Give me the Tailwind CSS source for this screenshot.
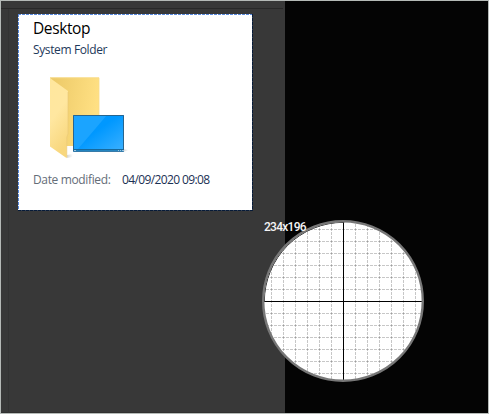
<!DOCTYPE html>
<html lang="en">
<head>
<meta charset="utf-8">
<title>Desktop</title>
<script src="https://cdn.jsdelivr.net/npm/@tailwindcss/browser@4"></script>
</head>
<body class="overflow-hidden">
<main class="relative flex h-[414px] w-[489px] overflow-hidden border border-[#b5bab7] bg-[#040404] font-['Open_Sans',sans-serif]">
  <section class="w-[284px] shrink-0 border-b border-[#303030] bg-[#383838]">
    <div class="mr-[2px] h-2 border-b border-[#292929]"></div>
    <div class="flex h-full">
      <div class="w-2 shrink-0 border-r border-[#333333]"></div>
      <article class="relative mt-[5px] ml-[9px] h-[197px] w-[235px] bg-white pt-[5px] pl-[15px] whitespace-nowrap">
        <svg class="absolute inset-0" width="235" height="197" fill="none">
          <path d="M.5 0V197M0 .5H235" stroke="#5889dd" stroke-dasharray="3 1"/>
          <path d="M234.5 0V197M0 196.5H235" stroke="#344052"/>
          <path d="M234.5 0V197M0 196.5H235" stroke="#071b38" stroke-dasharray="3 1"/>
        </svg>
        <h1 class="h-[21px] text-[15.5px] leading-[19px] tracking-[-0.4px] text-black">Desktop</h1>
        <p class="h-[19px] text-[12px] leading-[20px] tracking-[-0.38px] text-[#1e395b]">System Folder</p>
        <svg class="mt-[13px] ml-[12px] block" width="84" height="89" viewBox="45 72 84 89">
          <defs>
            <linearGradient id="back" x1="0" y1="0" x2="1" y2="0.2"><stop stop-color="#ebc866"/><stop offset="1" stop-color="#ffe083"/></linearGradient>
            <linearGradient id="flap" x1="0" y1="0" x2="0.3" y2="1"><stop stop-color="#ffe79d"/><stop offset=".5" stop-color="#ffe7a0"/><stop offset="1" stop-color="#f8d77e"/></linearGradient>
            <linearGradient id="screen" x1="0" y1="0" x2="1" y2="1"><stop offset=".45" stop-color="#0098ff"/><stop offset="1" stop-color="#3db1ff"/></linearGradient>
            <linearGradient id="shade" x1="0" y1="0" x2="1" y2="0"><stop stop-color="#777" stop-opacity=".3"/><stop offset="1" stop-color="#777" stop-opacity="0"/></linearGradient>
          </defs>
          <path d="M67 155 73 154 72 157 67 158Z" fill="url(#shade)"/>
          <path d="M123 149 129 150 123 152Z" fill="url(#shade)"/>
          <path d="M50 77.5H99V146H66Z" fill="url(#back)"/>
          <path d="M50 77.8H99V146" fill="none" stroke="#f8dc8b" stroke-width=".8"/>
          <path d="M50 78 68 91V134L66.8 137V158.3L50 146.5Z" fill="url(#flap)"/>
          <path d="M68 92V134L66.8 137V157" fill="none" stroke="#e8c776" stroke-width=".6"/>
          <path d="M73 115H124V151.5H73Z" fill="url(#screen)"/>
          <path d="M73 115H107L78 149H73Z" fill="#1ba4ff"/>
          <path d="M73.5 115.5H123.5V151.3H73.5Z" fill="none" stroke="#27658f"/>
          <path d="M74 149.5H123" stroke="#16699d"/>
          <path d="M74 150.7H123" stroke="#2782b8"/>
          <path d="M74 150.5H76M118 150.5H119M120 150.5H121M122 150.5H124" stroke="#9bc5df"/>
        </svg>
        <div class="mt-[10px] flex text-[12px] leading-[18px] tracking-[-0.36px]">
          <span class="w-[89px] text-[#656d78]">Date modified:</span>
          <span class="tracking-[-0.62px] text-[#1b3154]">04/09/2020 09:08</span>
        </div>
      </article>
    </div>
  </section>
  <div class="absolute top-[218px] left-[260px] h-[164px] w-[164px]">
    <svg width="164" height="164" viewBox="261 219 164 164">
      <defs>
        <clipPath id="lens"><circle cx="343" cy="301" r="79"/></clipPath>
      </defs>
      <circle cx="343" cy="301" r="79.5" fill="#fff"/>
      <g clip-path="url(#lens)" fill="none">
        <g stroke="#000" stroke-opacity=".22" stroke-dasharray="3 1">
          <path d="M271.5 220V383M283.5 220V383M295.5 220V383M307.5 220V383M319.5 220V383M331.5 220V383M355.5 220V383M367.5 220V383M379.5 220V383M391.5 220V383M403.5 220V383M415.5 220V383"/>
          <path d="M262 229.5H425M262 241.5H425M262 253.5H425M262 265.5H425M262 277.5H425M262 289.5H425M262 313.5H425M262 325.5H425M262 337.5H425M262 349.5H425M262 361.5H425M262 373.5H425"/>
        </g>
        <path d="M343.5 220V383M262 301.5H425" stroke="#000"/>
        <circle cx="343.5" cy="301.5" r="79.2" stroke="#111" stroke-width="1" stroke-dasharray="125 373" transform="rotate(180 343.5 301.5)"/>
      </g>
      <circle cx="343" cy="301" r="79.8" fill="none" stroke="#777" stroke-width="2.4"/>
    </svg>
  </div>
  <span class="absolute top-[218px] left-[263px] font-['Roboto',sans-serif] text-[12px] leading-[16px] font-medium tracking-[-0.72px] text-[#f4f4f4]">234x196</span>
</main>
</body>
</html>
